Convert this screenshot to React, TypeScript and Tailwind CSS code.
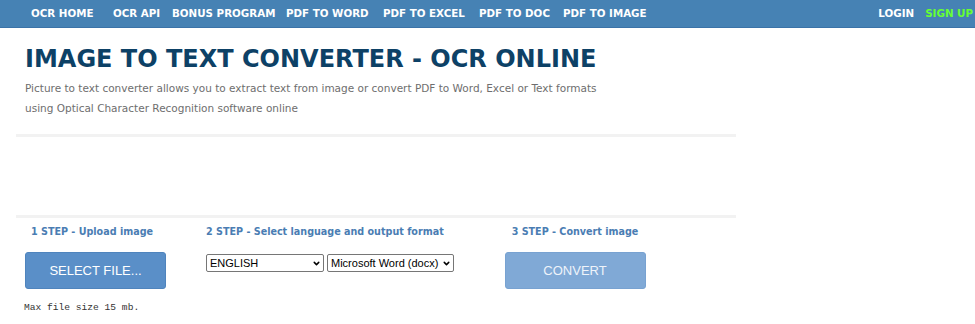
import { ChevronDown } from "lucide-react";

const navLinks = [
    { label: "OCR HOME", w: "w-[82px]" },
    { label: "OCR API", w: "w-[59px]" },
    { label: "BONUS PROGRAM", w: "w-[114px]" },
    { label: "PDF TO WORD", w: "w-[97px]" },
    { label: "PDF TO EXCEL", w: "w-[96px]" },
    { label: "PDF TO DOC", w: "w-[84px]" },
    { label: "PDF TO IMAGE", w: "w-[100px]" },
];

const SelectBox = ({ value, options, width }: { value: string; options: string[]; width: string }) => {
    return (
        <div className={`relative h-[18px] ${width}`}>
            <select
                defaultValue={value}
                className="block h-[18px] w-full appearance-none rounded-[2px] border border-[#767676] bg-white pl-[3px] pr-[13px] text-[11px] leading-[16px] text-black font-['Liberation_Sans',Arial,sans-serif]"
            >
                {options.map((o) => (
                    <option key={o}>{o}</option>
                ))}
            </select>
            <ChevronDown className="pointer-events-none absolute right-[3px] top-[5px] h-[9px] w-[9px] text-black" strokeWidth={4} />
        </div>
    );
};

const App = () => {
    return (
        <div className="min-h-screen w-full bg-white font-['DejaVu_Sans',Verdana,sans-serif]">
            {/* top navigation */}
            <nav className="flex h-[28px] items-center border-b border-[#3b73a8] bg-[#4682b4] pl-[31px] pr-[2px] text-[10.3px] font-bold text-white">
                {navLinks.map((l) => (
                    <a key={l.label} href="#" className={`${l.w} whitespace-nowrap`}>
                        {l.label}
                    </a>
                ))}
                <div className="ml-auto flex gap-[11px]">
                    <a href="#">LOGIN</a>
                    <a href="#" className="text-[#66ff33]">SIGN UP</a>
                </div>
            </nav>

            <div className="w-[736px] pl-[16px]">
                <div className="pl-[9px]">
                    <h1 className="mt-[17px] text-[24px] font-bold leading-[28px] text-[#0d4166]">
                        IMAGE TO TEXT CONVERTER - OCR ONLINE
                    </h1>
                    <p className="mt-[5px] text-[10.5px] leading-[20px] text-[#6e6e6e]">
                        Picture to text converter allows you to extract text from image or convert PDF to Word, Excel or Text formats
                        <br />
                        using Optical Character Recognition software online
                    </p>
                </div>

                <div className="mt-[16px] h-[3px] w-[720px] bg-[#f2f2f2]"></div>
                <div className="mt-[78px] h-[3px] w-[720px] bg-[#f2f2f2]"></div>

                {/* steps */}
                <div className="mt-[7px] flex">
                    <div className="flex w-[159px] flex-col items-center">
                        <div className="mr-[7px] h-[14px] text-[9.6px] font-bold leading-[14px] text-[#4a7db3]">1 STEP - Upload image</div>
                        <button className="mt-[13px] h-[37px] w-[141px] rounded-[3px] border border-[#4f84bd] bg-[#5a8fc8] text-[13px] text-white font-['Liberation_Sans',Arial,sans-serif]">
                            SELECT FILE...
                        </button>
                    </div>
                    <div className="ml-[31px] flex w-[290px] flex-col">
                        <div className="h-[14px] text-[9.6px] font-bold leading-[14px] text-[#4a7db3]">
                            2 STEP - Select language and output format
                        </div>
                        <div className="mt-[15px] flex gap-[3px]">
                            <SelectBox value="ENGLISH" options={["ENGLISH", "FRENCH", "GERMAN", "SPANISH"]} width="w-[118px]" />
                            <SelectBox
                                value="Microsoft Word (docx)"
                                options={["Microsoft Word (docx)", "Microsoft Excel (xlsx)", "Text Plain (txt)"]}
                                width="w-[127px]"
                            />
                        </div>
                    </div>
                    <div className="flex w-[158px] flex-col items-center">
                        <div className="h-[14px] text-[9.6px] font-bold leading-[14px] text-[#4a7db3]">3 STEP - Convert image</div>
                        <button className="mt-[13px] h-[37px] w-[141px] rounded-[3px] border border-[#78a2d1] bg-[#80a9d6] text-[13px] text-[#eef3fa] font-['Liberation_Sans',Arial,sans-serif]">
                            CONVERT
                        </button>
                    </div>
                </div>

                <div className="mt-[13px] pl-[8px] text-[9.6px] leading-[12px] text-[#333] font-['Liberation_Mono','Courier_New',monospace]">
                    Max file size 15 mb.
                </div>
            </div>
        </div>
    );
};

export default App;
